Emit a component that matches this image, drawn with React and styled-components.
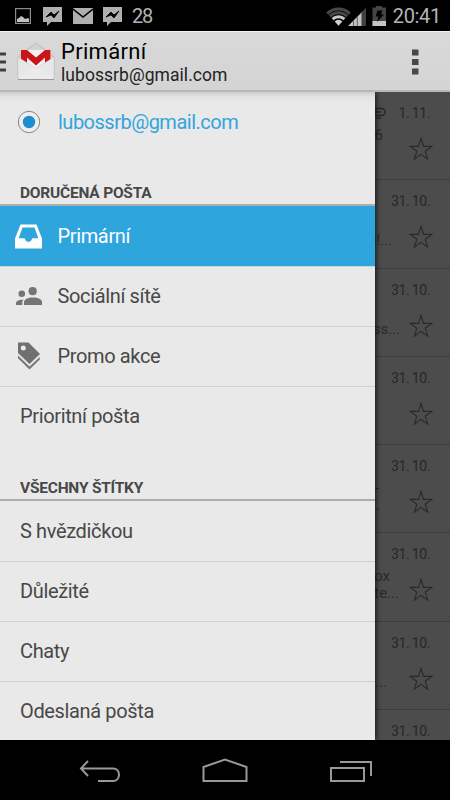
import React from "react";
import styled, { createGlobalStyle } from "styled-components";

const GlobalStyle = createGlobalStyle`
  * {
    box-sizing: border-box;
  }
  body {
    margin: 0;
    background: #000;
    font-family: Roboto, "Noto Sans", sans-serif;
  }
  svg {
    display: block;
    flex: none;
  }
`;

const Screen = styled.div`
  display: flex;
  flex-direction: column;
  width: 450px;
  height: 800px;
  overflow: hidden;
`;

const StatusBar = styled.header`
  display: flex;
  align-items: center;
  flex: none;
  height: 31px;
  padding: 0 9px 0 15px;
  background: #000;
  color: #b4b4b4;
`;

const StatusText = styled.span`
  font-size: 20px;
  line-height: 31px;
  padding-top: 2px;
  margin-left: ${(p) => p.$gap}px;
  letter-spacing: ${(p) => p.$spacing || 0}px;
`;

const Spacer = styled.div`
  flex: 1;
`;

const ActionBar = styled.div`
  display: flex;
  align-items: center;
  flex: none;
  height: 61px;
  padding: 1px 31px 0 0;
  background: linear-gradient(#d9d9d9, #d4d4d4);
  border-top: 1px solid #f2f2f2;
  border-bottom: 2px solid #b8b8b8;
`;

const Titles = styled.div`
  margin-left: 6px;
  padding-top: 2px;
`;

const Title = styled.h1`
  margin: 0;
  font-size: 22px;
  font-weight: 400;
  line-height: 25px;
  letter-spacing: 0.3px;
  color: #000;
`;

const Subtitle = styled.div`
  font-size: 17.5px;
  line-height: 22px;
  letter-spacing: 0.05px;
  color: #222;
`;

const Main = styled.main`
  position: relative;
  flex: none;
  height: 648px;
  overflow: hidden;
  background: #4c4c4c;
`;

const Drawer = styled.nav`
  position: absolute;
  top: 0;
  left: 0;
  width: 375px;
  height: 100%;
  background: linear-gradient(#cfcfcf, #e3e3e3 5px, #e9e9e9 12px);
  box-shadow: 1px 0 5px rgba(0, 0, 0, 0.75);
`;

const Account = styled.div`
  display: flex;
  align-items: center;
  height: 60px;
  padding-left: 17px;
  gap: 17px;
  font-size: 20px;
  letter-spacing: -0.5px;
  color: #33a5dc;
`;

const SectionTitle = styled.h2`
  display: flex;
  align-items: flex-end;
  height: ${(p) => p.$height}px;
  margin: 0;
  padding: 0 20px 2px;
  border-bottom: 2px solid #adadad;
  font-size: 15.5px;
  font-weight: 700;
  line-height: 18px;
  letter-spacing: -0.22px;
  color: #484848;
`;

const Item = styled.div`
  display: flex;
  align-items: center;
  height: 60px;
  padding-left: ${(p) => (p.$icon ? 15 : 20)}px;
  padding-bottom: ${(p) => (p.$first ? 0 : 1)}px;
  border-top: ${(p) => (p.$first ? "none" : "1px solid #d2d2d2")};
  background: ${(p) => (p.$active ? "#2fa5de" : "transparent")};
  color: ${(p) => (p.$active ? "#fff" : "#484848")};
  font-size: 20px;
  letter-spacing: -0.36px;
`;

const ItemIcon = styled.span`
  width: 42.5px;
`;

const Mail = styled.article`
  display: flex;
  justify-content: flex-end;
  height: 88.3px;
  border-bottom: 1px solid #3d3d3d;
  color: #272727;
`;

const Snippet = styled.div`
  flex: 1;
  display: flex;
  flex-direction: column;
  align-items: flex-end;
  padding-top: 35px;
  font-size: 15px;
  line-height: 17px;
  color: #2a2a2a;
`;

const Line = styled.div`
  height: 17px;
  margin-right: ${(p) => p.$right}px;
  white-space: nowrap;
`;

const Meta = styled.div`
  display: flex;
  flex-direction: column;
  align-items: flex-end;
  width: 50px;
  padding: 12px 20px 0 0;
  font-size: 14px;
  line-height: 18px;
  letter-spacing: -0.4px;
  word-spacing: -0.6px;
  white-space: nowrap;
`;

const Star = styled.svg`
  margin: 15px -3px 0 0;
`;

const DateRow = styled.div`
  display: flex;
  align-items: center;
  gap: 12px;
`;

const NavBar = styled.footer`
  display: flex;
  flex: none;
  justify-content: space-between;
  height: 60px;
  padding: 15px 77px 0 79px;
  background: #000;
`;

function MessengerIcon() {
  return (
    <svg width="20" height="20" viewBox="0 0 20 20">
      <path d="M0 1h19v15H8l-4 4v-4H0z" fill="#b0b0b0" />
      <path d="M3 11l5-5 3 3 5-4-5 7-3-3z" fill="#000" stroke="#000" strokeWidth="0.8" />
    </svg>
  );
}

function StatusIcons() {
  return (
    <>
      <svg width="16" height="16" viewBox="0 0 16 16">
        <rect x="0.6" y="0.6" width="14.8" height="14.8" fill="none" stroke="#8c8c8c" strokeWidth="1.2" />
        <path d="M2 14v-3l2-1 2-2 2 1 2 2 3-1 1 1v3z" fill="#c0c0c0" />
      </svg>
      <svg width="12" height="1" />
      <MessengerIcon />
      <svg width="10" height="1" />
      <svg width="20" height="16" viewBox="0 0 20 16">
        <path d="M0 0h20v16H0z" fill="#b0b0b0" />
        <path d="M0 1l10 8 10-8" fill="none" stroke="#000" strokeWidth="1.6" />
      </svg>
      <svg width="10" height="1" />
      <MessengerIcon />
    </>
  );
}

function SignalIcons() {
  return (
    <svg width="62" height="22" viewBox="325 4 62 22">
      <g fill="none" strokeWidth="3">
        <path d="M326.200 12.700a16 16 0 0 1 22.600 0" stroke="#484848" />
        <path d="M328.900 15.400a12.200 12.200 0 0 1 17.200 0" stroke="#484848" />
        <path d="M331.600 18.100a8.400 8.400 0 0 1 11.800 0" stroke="#c8c8c8" />
      </g>
      <path d="M333.700 20.400a5.400 5.400 0 0 1 7.600 0L337.500 24.800z" fill="#d0d0d0" />
      <path d="M347 25L361 11V25z" fill="#c4c4c4" />
      <path d="M361 11L365 6.500V25h-4z" fill="#404040" />
      <path d="M352.500 19v6M356.300 15v10M360.800 11v14" stroke="#444" strokeWidth="0.8" />
      <path d="M371.500 6.500h3.500V5h6v1.500h4V25h-13.500z" fill="#454545" />
      <path d="M371.500 20h13.500v5h-13.500z" fill="#c4c4c4" />
      <path d="M376.500 9.500h5l-1.500 4h3l-7 7.500 1.500-5.500h-3z" fill="#000" />
    </svg>
  );
}

function GmailIcon() {
  return (
    <svg width="38" height="40" viewBox="0 0 38 40">
      <path d="M1 15L19 1l18 14v22H1z" fill="#d2d2d2" stroke="#b3b3b3" strokeWidth="0.8" />
      <path d="M4 8h30v17L19 32 4 25z" fill="#f1f1f1" />
      <path d="M4 24V8h6l9 7.500L28 8h5.500v16l-5.500 3V15.500l-9 8-9-8V27z" fill="#cb1318" />
      <path d="M1 15l18 11.500L37 15v22H1z" fill="#e7e7e7" stroke="#c4c4c4" strokeWidth="0.5" />
      <path d="M1.500 37L15 25l4 2 4-2 13.500 12" fill="#ebebeb" />
      <path d="M1 37.500h36" stroke="#999" strokeWidth="1.2" />
    </svg>
  );
}

function InboxIcon() {
  return (
    <svg width="27" height="25" viewBox="0 0 27 25">
      <path
        fillRule="evenodd"
        d="M5.500 0.500h16L27 14.500V24.500H0V14.500zM7.500 3.500L3.700 14.300H9.500c1 1 1 3.500 4 3.500s3-2.500 4-3.500h5.800L19.500 3.500z"
        fill="#fff"
      />
    </svg>
  );
}

function PeopleIcon() {
  return (
    <svg width="27" height="20" viewBox="0 0 27 20" fill="#747474">
      <circle cx="17.700" cy="5.200" r="4.100" />
      <circle cx="6.800" cy="7.700" r="3.300" />
      <path d="M9 19v-3c0-2.500 4-4.500 9-4.500s9 2 9 4.500v3z" />
      <path d="M1 19v-1.800c0-2.500 3-3.700 7.500-3.500-1 .8-1.200 1.800-1.200 2.800V19z" />
    </svg>
  );
}

function TagIcon() {
  return (
    <svg width="27" height="28" viewBox="0 0 27 28">
      <path d="M3 0.500h10.500L25 12 14.500 22 3 11z" fill="#707070" />
      <circle cx="8.300" cy="6" r="2.500" fill="#e9e9e9" />
      <path d="M3 13.500v2.800l11.500 11.200L24.800 17.500v-2.500L14.500 24.500z" fill="#777" />
    </svg>
  );
}

const ICONS = { inbox: InboxIcon, people: PeopleIcon, tag: TagIcon };

const inbox = [
  { label: "Primární", icon: "inbox", active: true },
  { label: "Sociální sítě", icon: "people" },
  { label: "Promo akce", icon: "tag" },
  { label: "Prioritní pošta" },
];

const labels = [
  { label: "S hvězdičkou" },
  { label: "Důležité" },
  { label: "Chaty" },
  { label: "Odeslaná pošta" },
];

const mails = [
  { date: "1. 11.", clip: true, sender: "6", senderRight: 17 },
  { date: "31. 10.", text: "u!...", textRight: 8 },
  { date: "31. 10.", text: "ess...", textRight: 0 },
  { date: "31. 10." },
  { date: "31. 10.", sender: "-", senderRight: 21, text: "...", textRight: 20 },
  { date: "31. 10.", sender: "box", senderRight: 10, text: "rte...", textRight: 1 },
  { date: "31. 10.", text: "o...", textRight: 13 },
  { date: "31. 10." },
];

function MenuItem({ label, icon, active, first }) {
  const Icon = ICONS[icon];
  return (
    <Item $icon={icon} $active={active} $first={first}>
      {Icon && (
        <ItemIcon>
          <Icon />
        </ItemIcon>
      )}
      {label}
    </Item>
  );
}

function MailRow({ date, clip, sender, senderRight, text, textRight }) {
  return (
    <Mail>
      <Snippet>
        <Line $right={senderRight}>{sender}</Line>
        <Line $right={textRight}>{text}</Line>
      </Snippet>
      <Meta>
        <DateRow>
          {clip && (
            <svg width="16" height="12" viewBox="0 0 16 12" fill="none" stroke="#272727" strokeWidth="1.500">
              <path d="M0 1.500h10.500a3.500 3.500 0 0 1 0 7H3M0 5h10M5 11h5" />
            </svg>
          )}
          {date}
        </DateRow>
        <Star width="24" height="24" viewBox="0 0 24 24" fill="none" stroke="#292929" strokeWidth="1.100">
          <path d="M12 1.500l2.600 7.900h8.200l-6.600 4.900 2.500 7.900-6.700-4.800-6.700 4.800 2.500-7.900-6.600-4.900h8.200z" />
        </Star>
      </Meta>
    </Mail>
  );
}

export default function App() {
  return (
    <Screen>
      <GlobalStyle />
      <StatusBar>
        <StatusIcons />
        <StatusText $gap={9} $spacing={-1.2}>
          28
        </StatusText>
        <Spacer />
        <SignalIcons />
        <StatusText $gap={5} $spacing={-0.3}>
          20:41
        </StatusText>
      </StatusBar>
      <ActionBar>
        <svg width="17" height="20" viewBox="0 0 17 20">
          <path d="M0 2h6M0 10h6M0 18h6" stroke="#404040" strokeWidth="3" />
        </svg>
        <GmailIcon />
        <Titles>
          <Title>Primární</Title>
          <Subtitle>lubossrb@gmail.com</Subtitle>
        </Titles>
        <Spacer />
        <svg width="7" height="26" viewBox="0 0 7 26" fill="#484848">
          <path d="M0 0.500h6.500v6H0zM0 10h6.500v6H0zM0 19.500h6.500v6H0z" />
        </svg>
      </ActionBar>
      <Main>
        {mails.map((mail, i) => (
          <MailRow key={i} {...mail} />
        ))}
        <Drawer>
          <Account>
            <svg width="24" height="24" viewBox="0 0 24 24">
              <circle cx="12" cy="12" r="10.700" fill="#eee" stroke="#858585" />
              <circle cx="12" cy="12" r="6.200" fill="#1d8fce" />
            </svg>
            lubossrb@gmail.com
          </Account>
          <SectionTitle $height={54}>DORUČENÁ POŠTA</SectionTitle>
          {inbox.map((item, i) => (
            <MenuItem key={item.label} {...item} first={i === 0} />
          ))}
          <SectionTitle $height={55}>VŠECHNY ŠTÍTKY</SectionTitle>
          {labels.map((item, i) => (
            <MenuItem key={item.label} {...item} first={i === 0} />
          ))}
        </Drawer>
      </Main>
      <NavBar>
        <svg width="42" height="34" viewBox="0 0 42 34" fill="none" stroke="#999" strokeWidth="2">
          <path d="M9 6L2 13.500 9 21M2 13.500h32c8 0 8 12.500 0 12.500H19" />
        </svg>
        <svg width="46" height="34" viewBox="0 0 46 34" fill="none" stroke="#999" strokeWidth="2">
          <path d="M1.500 26V12L23 4.500 44.500 12v14z" />
        </svg>
        <svg width="44" height="34" viewBox="0 0 44 34" fill="none" stroke="#999" strokeWidth="2">
          <path d="M2 13h33v13H2zM11 7h31v14" />
        </svg>
      </NavBar>
    </Screen>
  );
}
